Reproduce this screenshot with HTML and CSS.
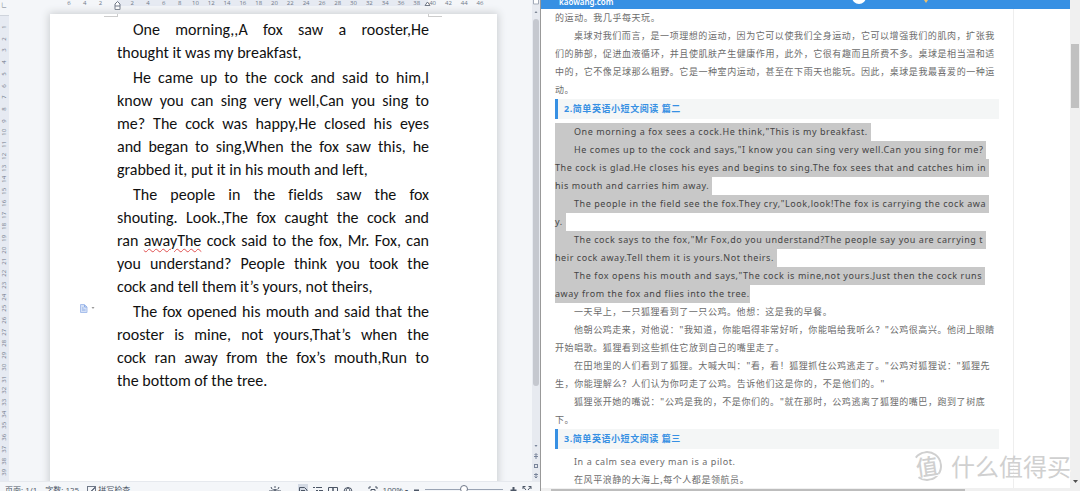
FILE: index.html
```html
<!DOCTYPE html>
<html lang="en">
<head>
<meta charset="utf-8">
<title>Writer and reading page</title>
<link rel="stylesheet" href="styles.css">
</head>
<body>
<main class="screen">
  <section class="writer" aria-label="Document editor">
    <div class="editor">
      <div class="vruler">
        <span class="tab-stop">∟</span>
        <div class="vnums" id="vnums"></div>
      </div>
      <div class="workspace">
        <div class="hruler">
          <div class="hrange"></div>
          <div class="hnums" id="hnums"></div>
          <svg class="indent left-indent" width="7" height="10" viewBox="0 0 7 10"><path d="M1 9.500V4L3.500 1.500 6 4v5.500zM1 6h5" fill="#fff" stroke="#6f7785"/></svg>
          <svg class="indent right-indent" width="7" height="7" viewBox="0 0 7 7"><path d="M1 5.500L3.500 2 6 5.500z" fill="#fff" stroke="#6f7785"/></svg>
        </div>
        <article class="page">
          <i class="corner corner-left"></i><i class="corner corner-right"></i>
          <svg class="para-icon" width="15" height="9" viewBox="0 0 15 9"><path d="M.5.5h4L7 3v5.500H.500z" fill="#d5e1f7" stroke="#a9c0ec"/><path d="M2 4h1.500M2 6h3.500M4.500 1v2H7" fill="none" stroke="#8faee6"/><path d="M11.500 3h3L13 5z" fill="#999"/></svg>
          <p><span class="full first">One morning,,A fox saw a rooster,He</span><span>thought it was my breakfast,</span></p>
          <p><span class="full first">He came up to the cock and said to him,I</span><span class="full">know you can sing very well,Can you sing to</span><span class="full">me? The cock was happy,He closed his eyes</span><span class="full">and began to sing,When the fox saw this, he</span><span>grabbed it, put it in his mouth and left,</span></p>
          <p><span class="full first">The people in the fields saw the fox</span><span class="full">shouting. Look.,The fox caught the cock and</span><span class="full">ran <u class="typo">awayThe</u> cock said to the fox, Mr. Fox, can</span><span class="full">you understand? People think you took the</span><span>cock and tell them it’s yours, not theirs,</span></p>
          <p><span class="full first">The fox opened his mouth and said that the</span><span class="full">rooster is mine, not yours,That’s when the</span><span class="full">cock ran away from the fox’s mouth,Run to</span><span>the bottom of the tree.</span></p>
        </article>
      </div>
      <div class="doc-scroll">
        <svg width="8" height="19" viewBox="0 0 8 19"><path d="M1.500 0v4h5V0" fill="#fff" stroke="#a3abb8"/><path d="M2.500 13h3L4 11z" fill="#7d8694"/></svg>
        <div class="doc-thumb"></div>
        <svg width="8" height="38" viewBox="0 0 8 38"><g fill="none" stroke="#79849a"><path d="M2.500 2h3L4 4z" fill="#79849a" stroke="none"/><path d="M2.500 12L4 10.500 5.500 12M2 13.500h4M4 11v5"/><rect x="2.500" y="21.500" width="3" height="3"/><path d="M2 31.500h4M4 30v5M2.500 33.500L4 35l1.500-1.500"/></g></svg>
      </div>
    </div>
    <footer class="status">
      <span class="stat">页面: 1/1</span>
      <span class="stat">字数: 125</span>
      <label class="spell"><input type="checkbox" checked>拼写检查</label>
      <div class="tools">
        <button class="eye" aria-label="Eye care"><svg width="12" height="12" viewBox="0 0 12 12"><path d="M1 7q5-5 10 0M6 1v2M2 2l1 2M10 2L9 4M.500 5l1 1M11.500 5l-1 1"/><circle cx="6" cy="7.500" r="2"/></svg></button>
        <button class="active" aria-label="Page view"><svg width="10" height="12" viewBox="0 0 10 12"><path d="M1.500 2.500h5L9 5v6H1.500zM3 5.500h4M3 7.500h4"/></svg></button>
        <button aria-label="Outline view"><svg width="10" height="12" viewBox="0 0 10 12"><path d="M0 2.500h2M3 2.500h6M3 5.500h2M6 5.500h4M3 8.500h2M6 8.500h4"/></svg></button>
        <button aria-label="Reading view"><svg width="10" height="12" viewBox="0 0 10 12"><path d="M.500 2.500H5v8H.500zM5 2.500h4.500v8H5z"/></svg></button>
        <button aria-label="Web view"><svg width="10" height="12" viewBox="0 0 10 12"><circle cx="5" cy="6.500" r="4"/><path d="M1 6.500h8M5 2.500q-4 4 0 8M5 2.500q4 4 0 8"/></svg></button>
        <button class="fit" aria-label="Fit"><svg width="10" height="12" viewBox="0 0 10 12"><path d="M1 4V2h2M7 2h2v2M3 4.500h4v5H3z"/></svg></button>
        <button class="percent">100% <span class="caret">▾</span></button>
        <button class="sign" aria-label="Zoom out"><svg width="7" height="12" viewBox="0 0 7 12"><path d="M1 5.500h5" stroke-width="2"/></svg></button>
        <input class="zoom" type="range" aria-label="Zoom" min="0" max="100" value="50">
        <button class="sign" aria-label="Zoom in"><svg width="7" height="12" viewBox="0 0 7 12"><path d="M.500 5.500h6M3.500 2v7" stroke-width="2"/></svg></button>
        <button aria-label="Full screen"><svg width="10" height="12" viewBox="0 0 10 12"><path d="M1 4V1.500h2.500M6.500 1.500H9V4M1 1.500L4 5M9 1.500L6 5"/></svg></button>
      </div>
    </footer>
  </section>

  <section class="browser" aria-label="Web page">
    <div class="web">
      <header class="site">
        <a href="#" class="site-name">kaowang.com</a>
        <svg class="site-art" width="90" height="9" viewBox="0 0 90 9"><circle cx="14" cy="-3" r="7" fill="#fff"/><path d="M79 0h4l-2 3z" fill="#ecc06c"/></svg>
      </header>
      <div class="article">
        <p class="cn"><span>的运动。我几乎每天玩。</span></p>
        <p class="cn"><span class="in">桌球对我们而言，是一项理想的运动，因为它可以使我们全身运动，它可以增强我们的肌肉，扩张我</span><span>们的肺部，促进血液循环，并且使肌肤产生健康作用，此外，它很有趣而且所费不多。桌球是相当温和适</span><span>中的，它不像足球那么粗野。它是一种室内运动，甚至在下雨天也能玩。因此，桌球是我最喜爱的一种运</span><span>动。</span></p>
        <h2>2.简单英语小短文阅读 篇二</h2>
        <div class="selected">
          <p><span class="in">One morning a fox sees a cock.He think,"This is my breakfast.</span></p>
          <p><span class="in">He comes up to the cock and says,"I know you can sing very well.Can you sing for me?</span><span>The cock is glad.He closes his eyes and begins to sing.The fox sees that and catches him in</span><span>his mouth and carries him away.</span></p>
          <p><span class="in">The people in the field see the fox.They cry,"Look,look!The fox is carrying the cock awa</span><span>y.</span></p>
          <p><span class="in">The cock says to the fox,"Mr Fox,do you understand?The people say you are carrying t</span><span>heir cock away.Tell them it is yours.Not theirs.</span></p>
          <p><span class="in">The fox opens his mouth and says,"The cock is mine,not yours.Just then the cock runs</span><span class="end">away from the fox and flies into the tree.</span></p>
        </div>
        <p class="cn"><span class="in">一天早上，一只狐狸看到了一只公鸡。他想：这是我的早餐。</span></p>
        <p class="cn"><span class="in">他朝公鸡走来，对他说："我知道，你能唱得非常好听，你能唱给我听么？"公鸡很高兴。他闭上眼睛</span><span>开始唱歌。狐狸看到这些抓住它放到自己的嘴里走了。</span></p>
        <p class="cn"><span class="in">在田地里的人们看到了狐狸。大喊大叫："看，看！狐狸抓住公鸡逃走了。"公鸡对狐狸说："狐狸先</span><span>生，你能理解么？人们认为你叼走了公鸡。告诉他们这是你的，不是他们的。"</span></p>
        <p class="cn"><span class="in">狐狸张开她的嘴说："公鸡是我的，不是你们的。"就在那时，公鸡逃离了狐狸的嘴巴，跑到了树底</span><span>下。</span></p>
        <h2>3.简单英语小短文阅读 篇三</h2>
        <p><span class="in">In a calm sea every man is a pilot.</span></p>
        <p class="cn"><span class="in">在风平浪静的大海上,每个人都是领航员。</span></p>
      </div>
      <div class="hscroll"><div class="hthumb"></div></div>
    </div>
    <div class="vscroll">
      <div class="vthumb"></div>
      <svg width="10" height="8" viewBox="0 0 10 8"><path d="M3 2h5L5.500 5z" fill="#505050"/></svg>
    </div>
  </section>
  <div class="watermark"><span class="badge">值</span><span>什么值得买</span></div>
</main>
<script src="rulers.js"></script>
</body>
</html>
```
FILE: rulers.js
```js
const fill = (id, values) => {
  const box = document.getElementById(id);
  for (const value of values) {
    const mark = document.createElement('span');
    mark.textContent = value;
    box.append(mark);
  }
};
fill('vnums', Array.from({ length: 39 }, (_, i) => i + 1));
fill('hnums', [6, 4, 2, '', ...Array.from({ length: 23 }, (_, i) => (i + 1) * 2)]);
```
FILE: styles.css
```css
* { box-sizing: border-box; }
body, p, h2 { margin: 0; }
body { background: #fff; overflow: hidden; }
button { border: 0; padding: 0; background: none; color: inherit; font: inherit; }
.screen { position: relative; display: flex; height: 100vh; overflow: hidden; }

/* Document editor */
.writer { flex: 0 0 50%; display: flex; flex-direction: column; min-width: 0; font-family: "Open Sans", "Noto Sans CJK SC", sans-serif; color: #4c5666; background: #f4f6f9; }
.editor { flex: 1; display: flex; min-height: 0; }
.vruler { flex: 0 0 9px; display: flex; flex-direction: column; font-size: 6px; color: #6f7888; }
.tab-stop { height: 16px; line-height: 10px; padding-left: 1px; border-bottom: 1px solid #cfd4dc; }
.vnums { flex: 1; display: flex; flex-direction: column; padding: 5px 0 3px; background: #e6eaf2; }
.vnums span { flex: 1; min-height: 0; writing-mode: vertical-rl; transform: rotate(180deg); line-height: 9px; text-align: center; }
.workspace { flex: 1; min-width: 0; overflow: hidden; }
.hruler { position: relative; height: 14px; padding: 0 44px 0 52px; }
.hrange { position: absolute; left: 108px; right: 104px; top: 0; height: 6px; background: #e6eaf2; }
.hnums { position: relative; display: flex; height: 6px; font-size: 6px; line-height: 6px; color: #6f7888; }
.hnums span { flex: 1 0 0; min-width: 0; text-align: center; }
.indent { position: absolute; top: 0; }
.left-indent { left: 105px; }
.right-indent { right: 101px; }
.page { position: relative; height: 100%; margin: 0 35px 0 41px; padding: 4px 68px 0 67px; background: #fff; box-shadow: 0 0 8px 1px #c9cccf; color: #111; font: 16px/23px Carlito, Lato, sans-serif; font-variant-ligatures: none; }
.page p + p { margin-top: 2px; }
.page p span { display: block; white-space: nowrap; }
.page .full { text-align: justify; text-align-last: justify; white-space: normal; }
.page .first { padding-left: 16px; }
.typo { text-decoration: underline wavy #e05050 1px; text-underline-offset: 2px; }
.corner { position: absolute; top: 0; width: 14px; height: 3px; border-bottom: 1px solid #ccc; }
.corner-left { left: 54px; border-right: 1px solid #ccc; }
.corner-right { right: 55px; border-left: 1px solid #ccc; }
.para-icon { position: absolute; left: 30px; top: 290px; }
.doc-scroll { flex: 0 0 8px; display: flex; flex-direction: column; background: #e7eaf0; }
.doc-scroll svg { flex: none; }
.doc-thumb { flex: 0 1 367px; margin: 0 1px auto; border-radius: 3px; background: #c5c8cf; }

.status { flex: 0 0 10px; display: flex; align-items: flex-start; overflow: hidden; padding: 2px 8px 0 5px; background: #f4f6f9; border-top: 1px solid #e6e9ee; font-size: 8px; line-height: 12px; white-space: nowrap; }
.stat { margin-right: 8px; }
.spell { display: flex; align-items: center; gap: 2px; }
.spell input { appearance: none; width: 9px; height: 9px; margin: 0; border: 1px solid #6f7888; background: linear-gradient(135deg, transparent 45%, #6f7888 45%, #6f7888 60%, transparent 60%); }
.tools { margin-left: auto; display: flex; gap: 5px; }
.tools svg { display: block; fill: none; stroke: #4c5666; }
.tools .eye { margin-right: 12px; }
.tools .active { background: #d4dae4; }
.tools .fit { margin-left: 10px; }
.caret { font-size: 6px; }
.zoom { appearance: none; width: 78px; height: 10px; margin: 0 2px 0 0; background: linear-gradient(#9aa4b4, #9aa4b4) 0 5px / 100% 1px no-repeat; }
.zoom::-webkit-slider-thumb { appearance: none; width: 8px; height: 8px; border: 1px solid #6f7888; border-radius: 50%; background: #fff; }

/* Web page */
.browser { flex: 1; min-width: 0; display: flex; border-left: 1px solid #999; font: 9px/18px "Noto Sans", "Noto Sans CJK SC", sans-serif; color: #6c6c6c; }
.web { flex: 1; min-width: 0; display: flex; flex-direction: column; }
.site { flex: 0 0 9px; display: flex; justify-content: space-between; overflow: hidden; padding: 0 135px 0 18px; background: #3790e3; }
.site-name { margin-top: -3px; color: #fff; font-weight: 600; line-height: 9px; text-decoration: none; font-size: 8px; }
.article { flex: 1; min-height: 0; overflow: hidden; margin-right: 56px; padding: 0 14px; border-right: 1px solid #eee; letter-spacing: 0.0625em; }
.article span { display: block; width: fit-content; white-space: nowrap; }
.article .in { padding-left: 19px; }
.cn { font-family: "Noto Sans CJK SC", sans-serif; }
h2 { height: 20px; margin-bottom: 4px; padding-left: 6px; border-left: 3px solid #3790e3; background: #f4f6f6; color: #3790e3; font: bold 9px/20px "Noto Sans", "Noto Sans CJK SC", sans-serif; }
.selected { color: #444; }
.selected span { padding-right: 3px; background: #c8c8c8; }
.selected .end { padding-right: 0; }
.hscroll { flex: 0 0 3px; padding: 1px 105px 0 10px; background: #f0f0f0; }
.hthumb { height: 2px; background: #bdbdbd; }
.vscroll { flex: 0 0 10px; display: flex; flex-direction: column; justify-content: space-between; padding: 44px 0 5px; background: #f0f0f0; }
.vthumb { height: 64px; margin: 0 1px; background: #c1c1c1; }

.watermark { position: absolute; right: 9px; bottom: 10px; display: flex; align-items: center; gap: 9px; color: #d0d0d0; font: 24px/30px "Noto Sans CJK SC", sans-serif; text-shadow: 1px 1px 0 #fff; }
.badge { width: 30px; height: 30px; border: 2px solid #d0d0d0; border-left-color: transparent; border-radius: 50%; font-size: 22px; font-weight: 500; line-height: 25px; text-align: center; transform: rotate(-8deg); }
```
